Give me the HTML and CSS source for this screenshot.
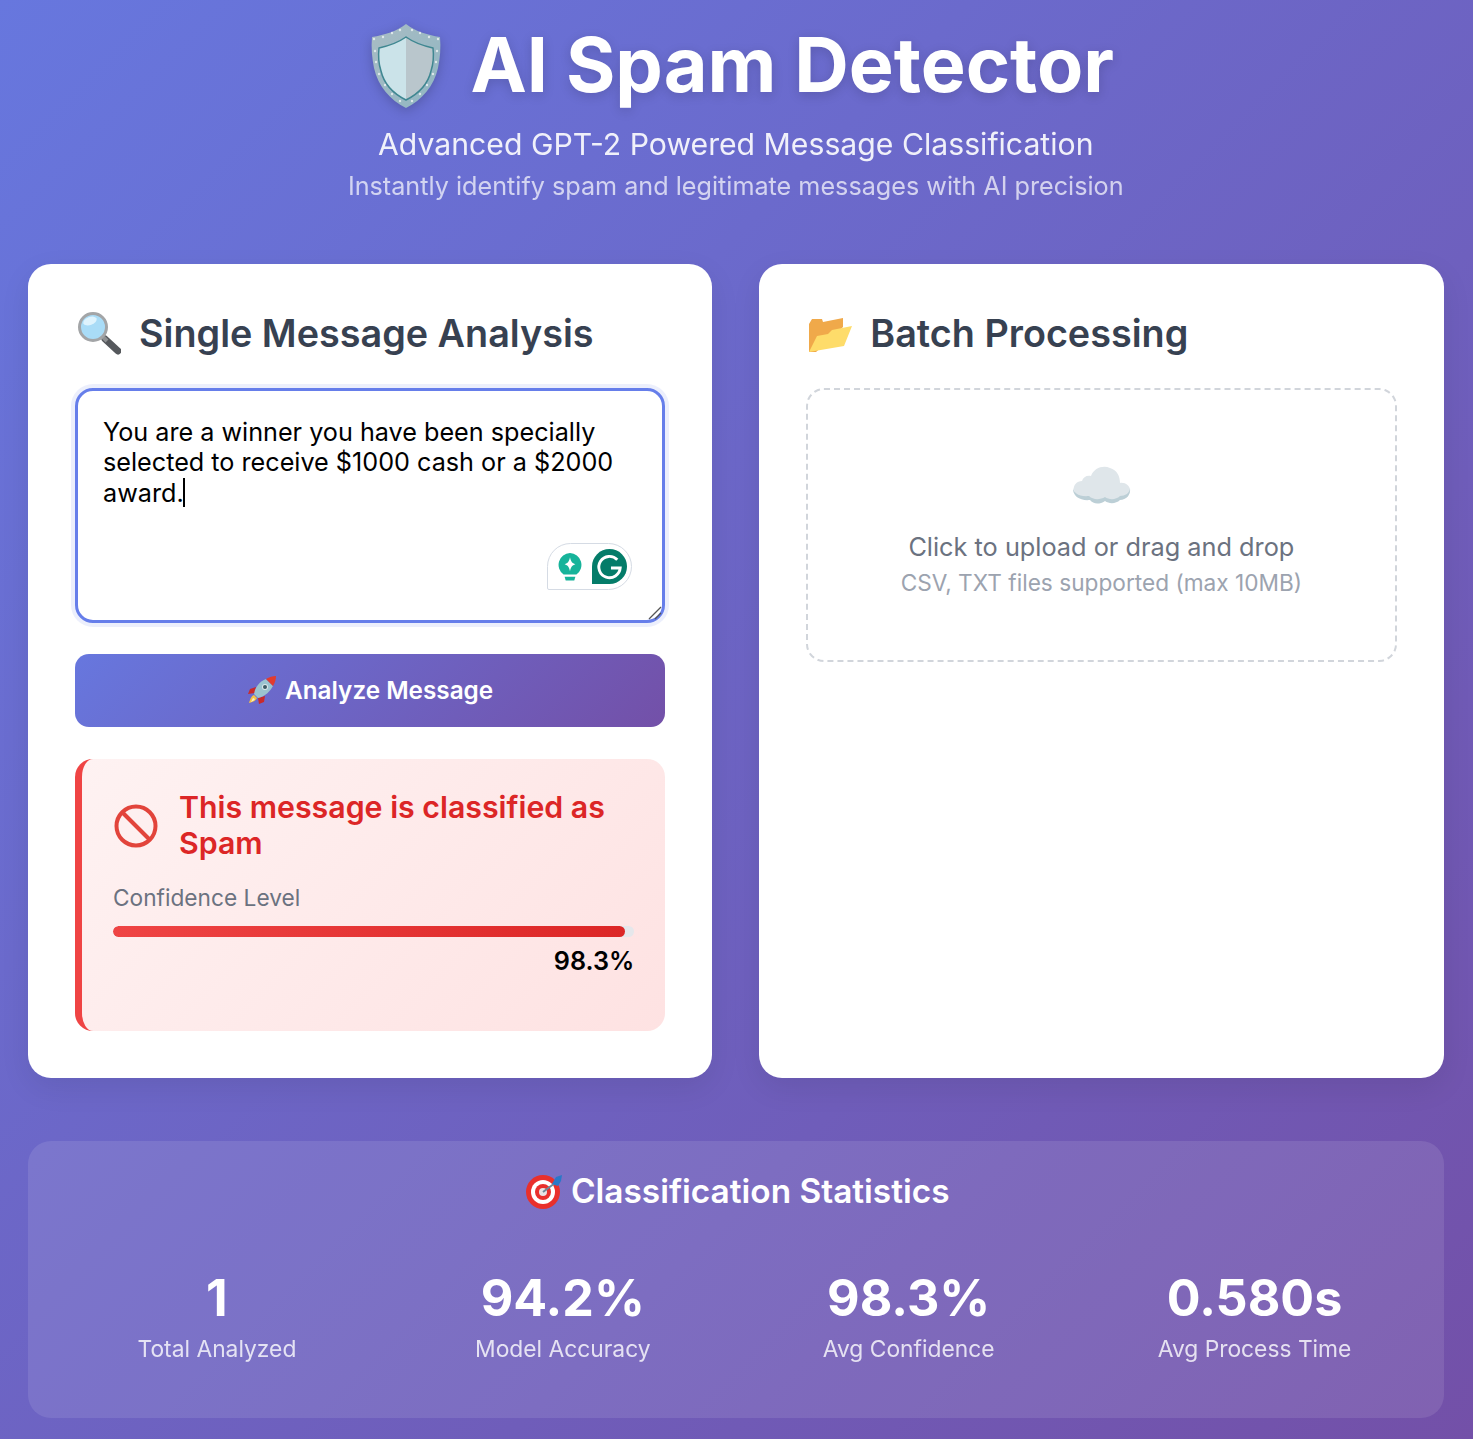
FILE: index.html
```html
<!DOCTYPE html>
<html lang="en">
<head>
    <meta charset="UTF-8">
    <meta name="viewport" content="width=device-width, initial-scale=1.0">
    <title>AI Spam Detector</title>
    <link rel="stylesheet" href="styles.css">
</head>
<body>
    <div class="container">
        <header class="header">
            <h1 class="title">
                <svg class="shield" viewBox="0 0 70 84">
                    <defs>
                        <linearGradient id="rim" x1="0" y1="0" x2="1" y2="1">
                            <stop offset="0" stop-color="#a9bcc4"/>
                            <stop offset="1" stop-color="#8fb6c2"/>
                        </linearGradient>
                    </defs>
                    <path d="M35 0C26 7 14 11 1 13C0 24 1 34 3 44C7 62 19 76 35 84C51 76 63 62 67 44C69 34 70 24 69 13C56 11 44 7 35 0Z" fill="url(#rim)"/>
                    <path d="M35 13C28 18 17 22 8 24C7 33 8 41 10 47C13 60 23 70 35 76Z" fill="#cbe3e9"/>
                    <path d="M35 13C42 18 53 22 62 24C63 33 62 41 60 47C57 60 47 70 35 76Z" fill="#b9c6cc"/>
                    <path d="M35 13C28 18 17 22 8 24C7 33 8 41 10 47C13 60 23 70 35 76C47 70 57 60 60 47C62 41 63 33 62 24C53 22 42 18 35 13Z" fill="none" stroke="#3f8791" stroke-width="1.5"/>
                    <g fill="#dfe8ea">
                        <circle cx="3" cy="15" r="1.2"/><circle cx="12" cy="13" r="1.2"/><circle cx="21" cy="9" r="1.2"/><circle cx="29" cy="6" r="1.2"/>
                        <circle cx="41" cy="6" r="1.2"/><circle cx="49" cy="9" r="1.2"/><circle cx="58" cy="13" r="1.2"/><circle cx="67" cy="15" r="1.2"/>
                        <circle cx="4" cy="27" r="1.2"/><circle cx="5" cy="38" r="1.2"/><circle cx="8" cy="50" r="1.2"/><circle cx="14" cy="61" r="1.2"/><circle cx="21" cy="70" r="1.2"/><circle cx="29" cy="77" r="1.2"/>
                        <circle cx="66" cy="27" r="1.2"/><circle cx="65" cy="38" r="1.2"/><circle cx="62" cy="50" r="1.2"/><circle cx="56" cy="61" r="1.2"/><circle cx="49" cy="70" r="1.2"/><circle cx="41" cy="77" r="1.2"/>
                    </g>
                </svg>
                <span class="title-text">AI Spam Detector</span>
            </h1>
            <p class="subtitle">Advanced GPT-2 Powered Message Classification</p>
            <p class="tagline">Instantly identify spam and legitimate messages with AI precision</p>
        </header>

        <main class="cards">
            <section class="card">
                <h2 class="card-title">
                    <svg class="card-icon" viewBox="0 0 46 46">
                        <path d="M30 29L43 41" stroke="#55585c" stroke-width="7" stroke-linecap="round"/>
                        <path d="M27 26L32 31" stroke="#8f9193" stroke-width="4"/>
                        <circle cx="18" cy="17" r="13.500" fill="#a9dcf7" stroke="#a3a5a7" stroke-width="3"/>
                        <ellipse cx="15" cy="11" rx="7" ry="4" fill="#def3fd" transform="rotate(-20 15 11)"/>
                    </svg>
                    <span>Single Message Analysis</span>
                </h2>

                <div class="message-box">
                    <textarea class="message" id="message" aria-label="Message" spellcheck="false">You are a winner you have been specially selected to receive $1000 cash or a $2000 award.</textarea>
                    <span class="caret"></span>
                    <div class="grammarly">
                        <svg class="grammarly-bulb" viewBox="0 0 24 28">
                            <path d="M12 1A11 11 0 0 0 6 21H18A11 11 0 0 0 12 1Z" fill="#16b39a"/>
                            <path d="M12 5C12.8 9 14 10.500 17 11.500C14 12.500 12.800 14 12 18C11.200 14 10 12.500 7 11.500C10 10.500 11.200 9 12 5Z" fill="#fff"/>
                            <path d="M7 23H17L16 26.500H8Z" fill="#16b39a"/>
                        </svg>
                        <svg class="grammarly-g" viewBox="0 0 36 36">
                            <path d="M18 0A18 18 0 0 1 18 36H0V18A18 18 0 0 1 18 0Z" fill="#047c69"/>
                            <path d="M26 11A11 11 0 1 0 29 19.500H19.500" fill="none" stroke="#fff" stroke-width="3"/>
                        </svg>
                    </div>
                    <svg class="grip" viewBox="0 0 14 14">
                        <path d="M1 13L13 1M7 13L13 7" stroke="#555" stroke-width="1.300"/>
                    </svg>
                </div>

                <button class="analyze-btn" id="analyzeBtn">
                    <svg class="rocket" viewBox="0 0 30 30">
                        <path d="M9 12L3 14L1 19L8 18Z" fill="#c92a2a"/>
                        <path d="M18 21L17 27L12 29L11 23Z" fill="#c92a2a"/>
                        <path d="M7 20C4 21 3 25 2 28C5 27 9 26 10 23Z" fill="#f6c445"/>
                        <path d="M6 23C5 25 4.500 26 4 27C6 26 7 25.500 8 24Z" fill="#f4f0d0"/>
                        <path d="M7 19L11 23C18 22 24 15 26 11L19 4C13 6 8 12 7 19Z" fill="#9bc4cf"/>
                        <path d="M19 4C22 2 26 1 29 1C29 4 28 8 26 11Z" fill="#e23b2e"/>
                        <circle cx="18" cy="12" r="3" fill="#dbe7ea"/>
                        <circle cx="18" cy="12" r="2" fill="#3e5a64"/>
                    </svg>
                    <span>Analyze Message</span>
                </button>

                <div class="result">
                    <div class="result-head">
                        <svg class="no-entry" viewBox="0 0 44 44">
                            <circle cx="22" cy="22" r="19.500" fill="none" stroke="#e2443b" stroke-width="4"/>
                            <path d="M8.500 8.500L35.500 35.500" stroke="#e2443b" stroke-width="4"/>
                        </svg>
                        <h3 class="result-title">This message is classified as Spam</h3>
                    </div>
                    <div class="confidence-label">Confidence Level</div>
                    <div class="bar"><div class="bar-fill" style="width: 98.3%"></div></div>
                    <div class="confidence-value">98.3%</div>
                </div>
            </section>

            <section class="card">
                <h2 class="card-title">
                    <svg class="card-icon" viewBox="0 0 46 46">
                        <path d="M3 42V14L6 9H16L17 12L37 8V17L10 42Z" fill="#f0a94a"/>
                        <path d="M3 42L11 26L22 24L26 20L46 16L38 36Z" fill="#fedc6a"/>
                    </svg>
                    <span>Batch Processing</span>
                </h2>
                <div class="upload">
                    <svg class="cloud" viewBox="0 0 60 44">
                        <path d="M3 28C2 23 6 19 11 19C12 15 16 13 20 14C23 6 32 3 39 6C46 8 49 14 49 21C54 20 59 24 59 28C59 34 55 37 49 37C45 41 38 41 34 38C28 42 22 41 19 37C10 38 4 35 3 28Z" fill="#dfe6ea"/>
                        <path d="M2 25C2 31 8 35 18 34C22 38 29 38 34 35C38 38 45 38 49 34C54 34 59 31 59 26C60 33 55 38 49 38C45 42 38 42 34 39C28 43 22 42 19 38C10 39 1 35 2 25Z" fill="#bccfd6"/>
                    </svg>
                    <p class="upload-text">Click to upload or drag and drop</p>
                    <p class="upload-sub">CSV, TXT files supported (max 10MB)</p>
                </div>
            </section>
        </main>

        <section class="stats">
            <h3 class="stats-title">
                <svg class="target" viewBox="0 0 38 38">
                    <circle cx="18" cy="20" r="17" fill="#e9302c"/>
                    <circle cx="18" cy="20" r="12" fill="#fff"/>
                    <circle cx="18" cy="20" r="8" fill="#e9302c"/>
                    <circle cx="18" cy="20" r="4" fill="#e8e4e4"/>
                    <path d="M18 20L30 11" stroke="#6f8a9a" stroke-width="2"/>
                    <path d="M27 12L31 5L37 3L36 9L33 14Z" fill="#2a78c8"/>
                </svg>
                <span>Classification Statistics</span>
            </h3>
            <div class="stats-grid">
                <div class="stat"><div class="stat-value">1</div><div class="stat-label">Total Analyzed</div></div>
                <div class="stat"><div class="stat-value">94.2%</div><div class="stat-label">Model Accuracy</div></div>
                <div class="stat"><div class="stat-value">98.3%</div><div class="stat-label">Avg Confidence</div></div>
                <div class="stat"><div class="stat-value">0.580s</div><div class="stat-label">Avg Process Time</div></div>
            </div>
        </section>
    </div>
</body>
</html>
```

FILE: styles.css
```css
* {
    box-sizing: border-box;
    margin: 0;
    padding: 0;
}

body {
    background: linear-gradient(135deg, #6777de 0%, #7350a8 100%);
    color: #fff;
    font-family: 'Inter', 'Liberation Sans', sans-serif;
    min-height: 100vh;
}

.container {
    padding: 0 29.5px 21px 28px;
}

.header {
    text-align: center;
    padding-top: 24px;
    height: 264px;
}

.title {
    display: flex;
    justify-content: center;
    align-items: center;
    gap: 29px;
    height: 84px;
    padding-left: 14px;
    font-size: 75.5px;
    font-weight: 700;
    line-height: 84px;
    text-shadow: 0 3px 12px rgba(0, 0, 0, 0.15);
}

.title-text {
    margin-bottom: 3px;
}

.shield {
    width: 70px;
    height: 84px;
    filter: drop-shadow(0 3px 6px rgba(0, 0, 0, 0.2));
}

.subtitle {
    font-size: 30.2px;
    line-height: 36px;
    margin-top: 18px;
    opacity: 0.9;
}

.tagline {
    font-size: 25.2px;
    line-height: 30px;
    margin-top: 9px;
    opacity: 0.7;
}

.cards {
    display: grid;
    grid-template-columns: 1fr 1fr;
    gap: 47px;
}

.card {
    background: #fff;
    border-radius: 23px;
    padding: 47px;
    height: 814px;
    box-shadow: 0 10px 30px rgba(0, 0, 0, 0.08);
}

.card-title {
    display: flex;
    align-items: center;
    gap: 18px;
    color: #374151;
    font-size: 37.75px;
    font-weight: 600;
    line-height: 44px;
    margin-bottom: 33px;
}

.card-icon {
    width: 46px;
    height: 46px;
    flex-shrink: 0;
    margin: -1px 0;
}

.message-box {
    position: relative;
    height: 235px;
    margin-bottom: 31px;
}

.message {
    display: block;
    width: 100%;
    height: 100%;
    padding: 25.5px 25px;
    border: 3px solid #667eea;
    border-radius: 18px;
    box-shadow: 0 0 0 4px rgba(102, 126, 234, 0.12);
    color: #000;
    font-family: inherit;
    font-size: 25.2px;
    line-height: 30.5px;
    outline: none;
    resize: none;
}

.caret {
    position: absolute;
    left: 108px;
    top: 90px;
    width: 2px;
    height: 29px;
    background: #000;
}

.grammarly {
    position: absolute;
    right: 33px;
    top: 155px;
    display: flex;
    align-items: center;
    gap: 9px;
    height: 47px;
    padding: 0 4px 0 9px;
    background: #fff;
    border: 1.5px solid #d5dbe4;
    border-radius: 24px 24px 24px 2px;
}

.grammarly-bulb {
    width: 26px;
    height: 30px;
}

.grammarly-g {
    width: 35px;
    height: 35px;
}

.grip {
    position: absolute;
    right: 3px;
    bottom: 3px;
    width: 14px;
    height: 14px;
}

.analyze-btn {
    display: flex;
    justify-content: center;
    align-items: center;
    gap: 8px;
    width: 100%;
    height: 73px;
    padding-bottom: 2px;
    border: none;
    border-radius: 14px;
    background: linear-gradient(135deg, #6777de 0%, #7350a8 100%);
    color: #fff;
    font-family: inherit;
    font-size: 24.3px;
    font-weight: 600;
    cursor: pointer;
}

.rocket {
    width: 30px;
    height: 30px;
}

.result {
    height: 272px;
    margin-top: 32px;
    padding: 30px 31px 0 31px;
    border-left: 7px solid #ef4444;
    border-radius: 18px;
    background: linear-gradient(135deg, #fef2f2 0%, #fee2e2 100%);
}

.result-head {
    display: flex;
    align-items: center;
    gap: 21px;
    margin-bottom: 23px;
}

.no-entry {
    width: 44px;
    height: 44px;
    flex-shrink: 0;
    margin: 2px 0 0 1px;
}

.result-title {
    color: #dc2626;
    font-size: 30.3px;
    font-weight: 600;
    line-height: 36px;
}

.confidence-label {
    color: #6b7280;
    font-size: 22.7px;
    line-height: 28px;
    margin-bottom: 14px;
}

.bar {
    height: 11px;
    border-radius: 6px;
    background: #e5e7eb;
    overflow: hidden;
}

.bar-fill {
    height: 100%;
    border-radius: 6px;
    background: linear-gradient(90deg, #ef4444, #dc2626);
}

.confidence-value {
    color: #000;
    font-size: 25.2px;
    font-weight: 600;
    line-height: 31px;
    margin-top: 9px;
    text-align: right;
}

.upload {
    display: flex;
    flex-direction: column;
    align-items: center;
    height: 274px;
    padding-top: 72px;
    border: 2.5px dashed #d1d5db;
    border-radius: 18px;
    text-align: center;
}

.cloud {
    width: 60px;
    height: 44px;
    margin-bottom: 26px;
}

.upload-text {
    color: #6b7280;
    font-size: 25.3px;
    line-height: 30px;
    margin-bottom: 6px;
}

.upload-sub {
    color: #9ca3af;
    font-size: 22.66px;
    line-height: 30px;
}

.stats {
    margin-top: 63px;
    height: 277px;
    padding-top: 28px;
    border-radius: 23px;
    background: rgba(255, 255, 255, 0.1);
}

.stats-title {
    display: flex;
    justify-content: center;
    align-items: center;
    gap: 8px;
    padding-left: 3px;
    font-size: 33.4px;
    font-weight: 600;
    line-height: 44px;
    margin-bottom: 51px;
}

.target {
    width: 38px;
    height: 38px;
}

.stats-grid {
    display: grid;
    grid-template-columns: repeat(4, 1fr);
    padding: 0 16px;
    text-align: center;
}

.stat-value {
    font-size: 50.2px;
    font-weight: 700;
    line-height: 68px;
}

.stat-label {
    font-size: 22.8px;
    line-height: 34px;
    opacity: 0.8;
}
```
